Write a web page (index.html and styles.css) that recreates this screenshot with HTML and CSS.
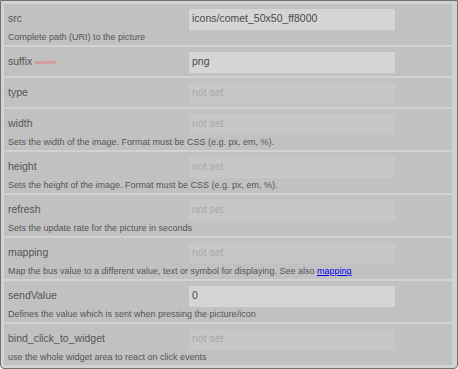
FILE: index.html
```html
<!DOCTYPE html>
<html>
<head>
<meta charset="utf-8">
<link rel="stylesheet" href="styles.css">
</head>
<body>
<div class="panel">
  <div class="row">
    <div class="line"><span class="label">src</span><span class="input filled">icons/comet_50x50_ff8000</span></div>
    <div class="desc">Complete path (URI) to the picture</div>
  </div>
  <div class="row">
    <div class="line"><span class="label">suffix <span class="req">required</span></span><span class="input filled">png</span></div>
  </div>
  <div class="row">
    <div class="line"><span class="label">type</span><span class="input empty">not set</span></div>
  </div>
  <div class="row">
    <div class="line"><span class="label">width</span><span class="input empty">not set</span></div>
    <div class="desc">Sets the width of the image. Format must be CSS (e.g. px, em, %).</div>
  </div>
  <div class="row">
    <div class="line"><span class="label">height</span><span class="input empty">not set</span></div>
    <div class="desc">Sets the height of the image. Format must be CSS (e.g. px, em, %).</div>
  </div>
  <div class="row">
    <div class="line"><span class="label">refresh</span><span class="input empty">not set</span></div>
    <div class="desc">Sets the update rate for the picture in seconds</div>
  </div>
  <div class="row">
    <div class="line"><span class="label">mapping</span><span class="input empty">not set</span></div>
    <div class="desc">Map the bus value to a different value, text or symbol for displaying. See also <a href="#">mapping</a></div>
  </div>
  <div class="row">
    <div class="line"><span class="label">sendValue</span><span class="input filled">0</span></div>
    <div class="desc">Defines the value which is sent when pressing the picture/icon</div>
  </div>
  <div class="row">
    <div class="line"><span class="label">bind_click_to_widget</span><span class="input empty">not set</span></div>
    <div class="desc">use the whole widget area to react on click events</div>
  </div>
</div>
</body>
</html>
```
FILE: styles.css
```css
html, body {
  margin: 0;
  padding: 0;
  background: #ffffff;
}
body {
  font-family: "Liberation Sans", Arial, sans-serif;
  color: #555555;
}
.panel {
  width: 458px;
  height: 369px;
  box-sizing: border-box;
  border: 1px solid #707070;
  border-radius: 0 0 4px 4px;
  background: #d2d2d2;
  padding: 3px 5px 3px 3px;
  display: flex;
  flex-direction: column;
  gap: 2px;
}
.row {
  background: #c1c1c1;
  padding: 5px 4px 3px 4px;
}
.line {
  display: flex;
  align-items: center;
  height: 21px;
}
.label {
  width: 181px;
  font-size: 10.5px;
  color: #555555;
  line-height: 13px;
  margin-top: -2px;
}
.req {
  font-size: 5.5px;
  color: #e86a6a;
  vertical-align: 1px;
}
.input {
  width: 206px;
  height: 21px;
  box-sizing: border-box;
  padding: 0 3px;
  font-size: 10.5px;
  line-height: 19px;
}
.filled {
  background: #d5d5d5;
  color: #4a4a4a;
}
.empty {
  background: #c7c7c7;
  color: #a9a9a9;
}
.desc {
  font-size: 9px;
  line-height: 11px;
  margin-top: 2px;
  margin-bottom: -1px;
  color: #555555;
}
.desc a {
  color: #0000ee;
  text-decoration: underline;
}
```
